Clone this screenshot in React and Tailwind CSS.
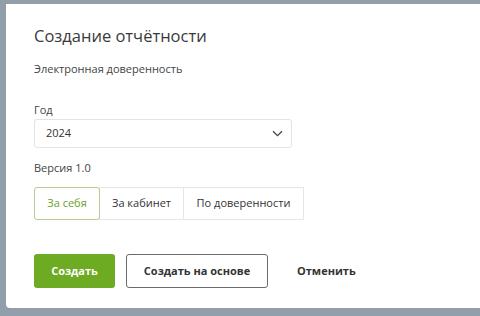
import React, { useState } from 'react';

export default function App() {
  const [mode, setMode] = useState('self');
  const modes = [
    { id: 'self', label: 'За себя', w: 'w-[66px]' },
    { id: 'cab', label: 'За кабинет', w: 'w-[85px]' },
    { id: 'proxy', label: 'По доверенности', w: 'w-[121px]' },
  ];

  return (
    <div className="w-[480px] h-[316px] bg-[#929eaa] pt-[4px] pl-[6px] pb-[8px] font-['Open_Sans',sans-serif]">
      <div className="h-full bg-white rounded-bl-[4px] pl-[28px] pt-[20px]">
        <h1 className="text-[16.5px] leading-[24px] text-[#3a3a3a]">Создание отчётности</h1>
        <p className="mt-[13px] text-[11px] leading-[16px] text-[#444]">Электронная доверенность</p>

        <label className="block mt-[25px] text-[11px] leading-[16px] text-[#444]">Год</label>
        <div className="mt-[1px] w-[258px] h-[29px] border border-[#e3e3e3] rounded-[3px] flex items-center justify-between pl-[11px] pr-[8px]">
          <span className="text-[11px] text-[#333]">2024</span>
          <svg width="11" height="7" viewBox="0 0 11 7" fill="none">
            <path d="M1 1.2 L5.5 5.7 L10 1.2" stroke="#444" strokeWidth="1.3" />
          </svg>
        </div>

        <p className="mt-[12px] text-[11px] leading-[16px] text-[#444]">Версия 1.0</p>
        <div className="mt-[11px] flex">
          {modes.map((m) => (
            <button
              key={m.id}
              onClick={() => setMode(m.id)}
              className={
                m.w +
                ' h-[33px] text-[11px] -ml-px first:ml-0 border ' +
                (mode === m.id
                  ? 'border-[#b5cc94] text-[#6a9f2a] rounded-[3px] relative z-10'
                  : 'border-[#e6e6e6] text-[#333]')
              }
            >
              {m.label}
            </button>
          ))}
        </div>

        <div className="mt-[34px] flex items-center">
          <button className="w-[81px] h-[34px] bg-[#6cab22] rounded-[3px] text-white text-[11px] font-bold">
            Создать
          </button>
          <button className="ml-[11px] w-[142px] h-[34px] border border-[#6b6b6b] rounded-[3px] text-[#333] text-[11px] font-bold">
            Создать на основе
          </button>
          <button className="ml-[29px] text-[#333] text-[11px] font-bold">Отменить</button>
        </div>
      </div>
    </div>
  );
}
